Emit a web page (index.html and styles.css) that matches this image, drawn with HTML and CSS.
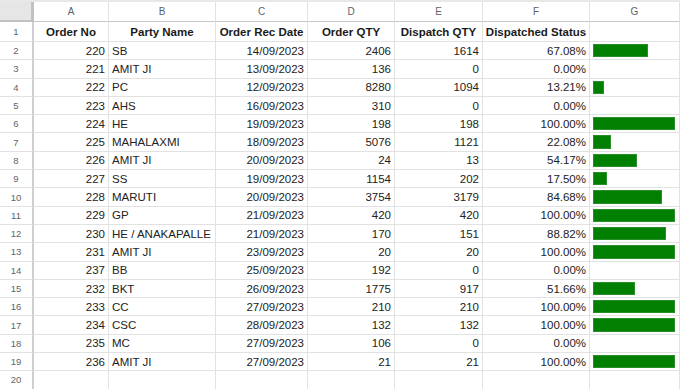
FILE: index.html
```html
<!DOCTYPE html>
<html>
<head>
<meta charset="utf-8">
<link rel="stylesheet" href="styles.css">
</head>
<body>
<div class="sheet">
  <div class="row colhead">
    <div class="corner"></div>
    <div class="ch">A</div><div class="ch">B</div><div class="ch">C</div><div class="ch">D</div><div class="ch">E</div><div class="ch">F</div><div class="ch">G</div>
  </div>
  <div class="row first">
    <div class="rh">1</div>
    <div class="c hd">Order No</div><div class="c hd">Party Name</div><div class="c hd">Order Rec Date</div><div class="c hd">Order QTY</div><div class="c hd">Dispatch QTY</div><div class="c hd">Dispatched Status</div><div class="c"></div>
  </div>
  <div class="row"><div class="rh">2</div><div class="c n">220</div><div class="c">SB</div><div class="c n">14/09/2023</div><div class="c n">2406</div><div class="c n">1614</div><div class="c n">67.08%</div><div class="c g"><div class="bar" style="width:67.08%"></div></div></div>
  <div class="row"><div class="rh">3</div><div class="c n">221</div><div class="c">AMIT JI</div><div class="c n">13/09/2023</div><div class="c n">136</div><div class="c n">0</div><div class="c n">0.00%</div><div class="c g"></div></div>
  <div class="row"><div class="rh">4</div><div class="c n">222</div><div class="c">PC</div><div class="c n">12/09/2023</div><div class="c n">8280</div><div class="c n">1094</div><div class="c n">13.21%</div><div class="c g"><div class="bar" style="width:13.21%"></div></div></div>
  <div class="row"><div class="rh">5</div><div class="c n">223</div><div class="c">AHS</div><div class="c n">16/09/2023</div><div class="c n">310</div><div class="c n">0</div><div class="c n">0.00%</div><div class="c g"></div></div>
  <div class="row"><div class="rh">6</div><div class="c n">224</div><div class="c">HE</div><div class="c n">19/09/2023</div><div class="c n">198</div><div class="c n">198</div><div class="c n">100.00%</div><div class="c g"><div class="bar" style="width:100%"></div></div></div>
  <div class="row"><div class="rh">7</div><div class="c n">225</div><div class="c">MAHALAXMI</div><div class="c n">18/09/2023</div><div class="c n">5076</div><div class="c n">1121</div><div class="c n">22.08%</div><div class="c g"><div class="bar" style="width:22.08%"></div></div></div>
  <div class="row"><div class="rh">8</div><div class="c n">226</div><div class="c">AMIT JI</div><div class="c n">20/09/2023</div><div class="c n">24</div><div class="c n">13</div><div class="c n">54.17%</div><div class="c g"><div class="bar" style="width:54.17%"></div></div></div>
  <div class="row"><div class="rh">9</div><div class="c n">227</div><div class="c">SS</div><div class="c n">19/09/2023</div><div class="c n">1154</div><div class="c n">202</div><div class="c n">17.50%</div><div class="c g"><div class="bar" style="width:17.5%"></div></div></div>
  <div class="row"><div class="rh">10</div><div class="c n">228</div><div class="c">MARUTI</div><div class="c n">20/09/2023</div><div class="c n">3754</div><div class="c n">3179</div><div class="c n">84.68%</div><div class="c g"><div class="bar" style="width:84.68%"></div></div></div>
  <div class="row"><div class="rh">11</div><div class="c n">229</div><div class="c">GP</div><div class="c n">21/09/2023</div><div class="c n">420</div><div class="c n">420</div><div class="c n">100.00%</div><div class="c g"><div class="bar" style="width:100%"></div></div></div>
  <div class="row"><div class="rh">12</div><div class="c n">230</div><div class="c">HE / ANAKAPALLE</div><div class="c n">21/09/2023</div><div class="c n">170</div><div class="c n">151</div><div class="c n">88.82%</div><div class="c g"><div class="bar" style="width:88.82%"></div></div></div>
  <div class="row"><div class="rh">13</div><div class="c n">231</div><div class="c">AMIT JI</div><div class="c n">23/09/2023</div><div class="c n">20</div><div class="c n">20</div><div class="c n">100.00%</div><div class="c g"><div class="bar" style="width:100%"></div></div></div>
  <div class="row"><div class="rh">14</div><div class="c n">237</div><div class="c">BB</div><div class="c n">25/09/2023</div><div class="c n">192</div><div class="c n">0</div><div class="c n">0.00%</div><div class="c g"></div></div>
  <div class="row"><div class="rh">15</div><div class="c n">232</div><div class="c">BKT</div><div class="c n">26/09/2023</div><div class="c n">1775</div><div class="c n">917</div><div class="c n">51.66%</div><div class="c g"><div class="bar" style="width:51.66%"></div></div></div>
  <div class="row"><div class="rh">16</div><div class="c n">233</div><div class="c">CC</div><div class="c n">27/09/2023</div><div class="c n">210</div><div class="c n">210</div><div class="c n">100.00%</div><div class="c g"><div class="bar" style="width:100%"></div></div></div>
  <div class="row"><div class="rh">17</div><div class="c n">234</div><div class="c">CSC</div><div class="c n">28/09/2023</div><div class="c n">132</div><div class="c n">132</div><div class="c n">100.00%</div><div class="c g"><div class="bar" style="width:100%"></div></div></div>
  <div class="row"><div class="rh">18</div><div class="c n">235</div><div class="c">MC</div><div class="c n">27/09/2023</div><div class="c n">106</div><div class="c n">0</div><div class="c n">0.00%</div><div class="c g"></div></div>
  <div class="row"><div class="rh">19</div><div class="c n">236</div><div class="c">AMIT JI</div><div class="c n">27/09/2023</div><div class="c n">21</div><div class="c n">21</div><div class="c n">100.00%</div><div class="c g"><div class="bar" style="width:100%"></div></div></div>
  <div class="row"><div class="rh">20</div><div class="c"></div><div class="c"></div><div class="c"></div><div class="c"></div><div class="c"></div><div class="c"></div><div class="c g"></div></div>
</div>
</body>
</html>
```

FILE: styles.css
```css
* { box-sizing: border-box; }
html, body { margin: 0; padding: 0; background: #fff; overflow: hidden; }
body {
  font-family: "Liberation Sans", Arial, sans-serif;
  font-size: 11.5px;
  color: #222;
}
.sheet {
  width: 680px;
  border-top: 2px solid #e8e8e8;
}
.row {
  display: grid;
  grid-template-columns: 34px 75px 107px 92px 87px 88px 107px 90px;
  height: 18.3px;
}
.row > div {
  border-right: 1px solid #e2e2e2;
  border-bottom: 1px solid #e2e2e2;
  display: flex;
  align-items: center;
  overflow: hidden;
  white-space: nowrap;
}
.colhead { height: 20px; }
.colhead > div { border-bottom: 1px solid #c8c8c8; }
.first { height: 20px; }
.corner {
  background: #e6e6e6;
  border-right: 3px solid #c2c2c2 !important;
  border-bottom: 2px solid #c2c2c2 !important;
}
.ch {
  justify-content: center;
  font-size: 10px;
  color: #5f6368;
  background: #fff;
}
.rh {
  justify-content: center;
  font-size: 9.5px;
  color: #5f6368;
  border-right: 2px solid #cfcfcf !important;
}
.c { padding: 0 3px; }
.n { justify-content: flex-end; }
.hd { justify-content: center; font-weight: bold; color: #1a1a1a; }
.g { padding: 2px 4px 2px 3px; align-items: stretch; }
.bar {
  background: #007f00;
  border: 1px solid #2a8f2a;
  height: 100%;
}
```
